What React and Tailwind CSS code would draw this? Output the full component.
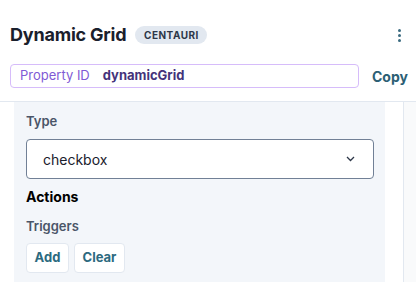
import React from "react";

export default function App() {
  return (
    <div className="w-[416px] h-[282px] overflow-hidden bg-white font-['Inter',sans-serif] text-[#1a202c]">
      {/* header */}
      <div className="flex items-center h-[22px] mt-[24px] pl-[10px] pr-[12px]">
        <h1 className="text-[18px] font-bold leading-none tracking-[-0.2px]">Dynamic Grid</h1>
        <span className="ml-[9px] h-[18px] w-[72px] flex items-center justify-center rounded-full bg-[#e2e8f0] text-[10px] font-bold tracking-[0.5px] text-[#2d3748]">
          CENTAURI
        </span>
        <div className="ml-auto flex flex-col gap-[2px] pr-[3px]">
          <span className="w-[3px] h-[3px] rounded-full bg-[#3b6b80]" />
          <span className="w-[3px] h-[3px] rounded-full bg-[#3b6b80]" />
          <span className="w-[3px] h-[3px] rounded-full bg-[#3b6b80]" />
        </div>
      </div>

      <div className="flex items-center mt-[18px] pl-[10px]">
        <div className="w-[349px] h-[24px] flex items-center border border-[#d6bcfa] rounded-[4px] px-[9px] text-[13px]">
          <span className="text-[#805ad5]">Property ID</span>
          <span className="ml-[13px] font-bold text-[#44337a]">dynamicGrid</span>
        </div>
        <button className="ml-[13px] text-[14px] font-bold text-[#2c5f75]">Copy</button>
      </div>

      <div className="mt-[13px] border-t border-[#e2e8f0] flex h-[181px]">
        <div className="ml-[14px] w-[371px] bg-[#f3f6fa] px-[12px] pt-[10px]">
          <div className="text-[13px] font-semibold text-[#4a5568] leading-[18px]">Type</div>
          <div className="mt-[9px] h-[40px] w-[348px] flex items-center bg-white border border-[#718096] rounded-[4px] pl-[16px] pr-[18px]">
            <span className="text-[14px] text-[#1a202c]">checkbox</span>
            <svg className="ml-auto" width="9" height="6" viewBox="0 0 9 6" fill="none">
              <path d="M1 1l3.5 3.5L8 1" stroke="#2d3748" strokeWidth="1.3" />
            </svg>
          </div>
          <div className="mt-[9px] text-[14px] font-bold text-black leading-[18px]">Actions</div>
          <div className="mt-[11px] text-[13px] font-semibold text-[#4a5568] leading-[18px]">Triggers</div>
          <div className="mt-[8px] flex gap-[5px]">
            <button className="h-[30px] w-[43px] bg-white border border-[#e2e8f0] rounded-[4px] text-[13px] font-bold text-[#2c6a80]">
              Add
            </button>
            <button className="h-[30px] w-[51px] bg-white border border-[#e2e8f0] rounded-[4px] text-[13px] font-bold text-[#2c6a80]">
              Clear
            </button>
          </div>
        </div>
        <div className="w-[18px]" />
        <div className="flex-1 border-l border-[#e2e8f0] bg-[#f9fafb]" />
      </div>
    </div>
  );
}
